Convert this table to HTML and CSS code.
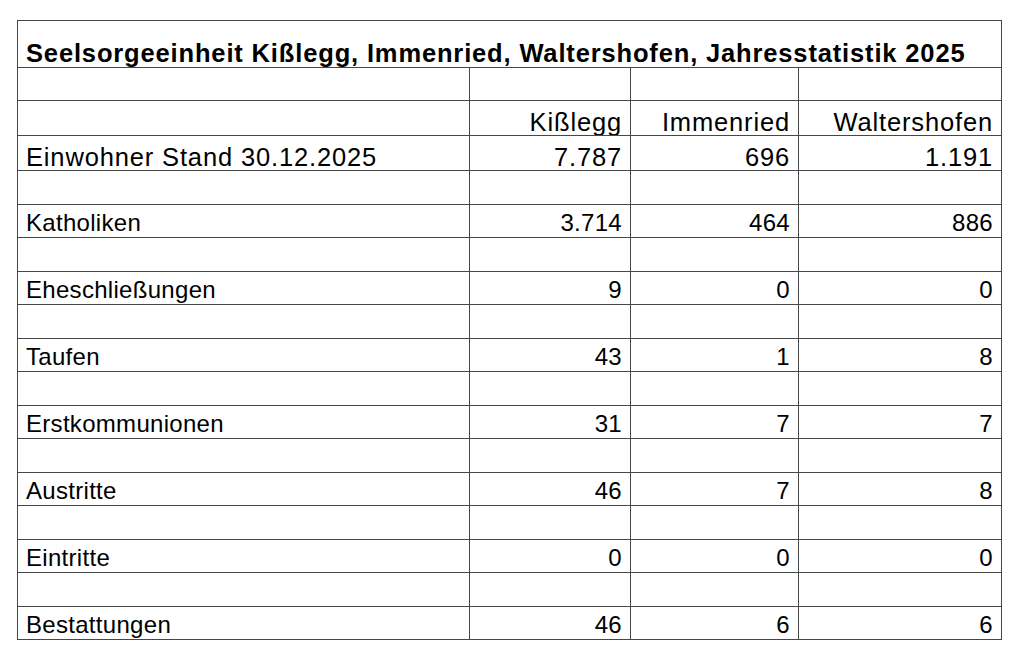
FILE: index.html
```html
<!DOCTYPE html>
<html lang="de">
<head>
<meta charset="utf-8">
<title>Jahresstatistik 2025</title>
<link rel="stylesheet" href="styles.css">
</head>
<body>
<table class="stats">
  <colgroup>
    <col class="c-label">
    <col class="c-k">
    <col class="c-i">
    <col class="c-w">
  </colgroup>
  <tr class="r-title"><td colspan="4" class="title">Seelsorgeeinheit Kißlegg, Immenried, Waltershofen, Jahresstatistik 2025</td></tr>
  <tr class="r-gap1"><td></td><td></td><td></td><td></td></tr>
  <tr class="r-big"><td></td><td class="num">Kißlegg</td><td class="num">Immenried</td><td class="num">Waltershofen</td></tr>
  <tr class="r-big"><td class="label">Einwohner Stand 30.12.2025</td><td class="num">7.787</td><td class="num">696</td><td class="num">1.191</td></tr>
  <tr class="r-gap"><td></td><td></td><td></td><td></td></tr>
  <tr class="r-row"><td class="label">Katholiken</td><td class="num">3.714</td><td class="num">464</td><td class="num">886</td></tr>
  <tr class="r-gap"><td></td><td></td><td></td><td></td></tr>
  <tr class="r-row"><td class="label">Eheschließungen</td><td class="num">9</td><td class="num">0</td><td class="num">0</td></tr>
  <tr class="r-gap"><td></td><td></td><td></td><td></td></tr>
  <tr class="r-row"><td class="label">Taufen</td><td class="num">43</td><td class="num">1</td><td class="num">8</td></tr>
  <tr class="r-gap"><td></td><td></td><td></td><td></td></tr>
  <tr class="r-row"><td class="label">Erstkommunionen</td><td class="num">31</td><td class="num">7</td><td class="num">7</td></tr>
  <tr class="r-gap"><td></td><td></td><td></td><td></td></tr>
  <tr class="r-row"><td class="label">Austritte</td><td class="num">46</td><td class="num">7</td><td class="num">8</td></tr>
  <tr class="r-gap"><td></td><td></td><td></td><td></td></tr>
  <tr class="r-row"><td class="label">Eintritte</td><td class="num">0</td><td class="num">0</td><td class="num">0</td></tr>
  <tr class="r-gap"><td></td><td></td><td></td><td></td></tr>
  <tr class="r-row"><td class="label">Bestattungen</td><td class="num">46</td><td class="num">6</td><td class="num">6</td></tr>
</table>
</body>
</html>
```

FILE: styles.css
```css
html, body {
  margin: 0;
  padding: 0;
  background: #ffffff;
}

body {
  font-family: "Liberation Sans", Arial, Helvetica, sans-serif;
  color: #000000;
}

.stats {
  margin: 20px 0 0 17px;
  width: 984px;
  table-layout: fixed;
  border-collapse: collapse;
}

.c-label { width: 452px; }
.c-k { width: 161px; }
.c-i { width: 168px; }
.c-w { width: 203px; }

.stats td {
  border: 1px solid #474747;
  padding: 0 8px 1px 8px;
  vertical-align: bottom;
  font-size: 24px;
  letter-spacing: 0.3px;
  line-height: 26px;
  white-space: nowrap;
  overflow: hidden;
}

.stats .num {
  text-align: right;
  padding-right: 8px;
}

.r-title td { height: 45px; }
.r-gap1 td { height: 31.5px; }
.r-big td { height: 33.5px; }
.r-gap td, .r-row td { height: 31.5px; }

.stats .title {
  font-weight: bold;
  font-size: 25.5px;
  letter-spacing: 0.85px;
  padding-left: 8px;
  padding-bottom: 0.5px;
}

.r-big td {
  font-size: 25.5px;
  letter-spacing: 0.85px;
  padding-bottom: 0.5px;
}

.r-big .num {
  padding-right: 8px;
}
```
